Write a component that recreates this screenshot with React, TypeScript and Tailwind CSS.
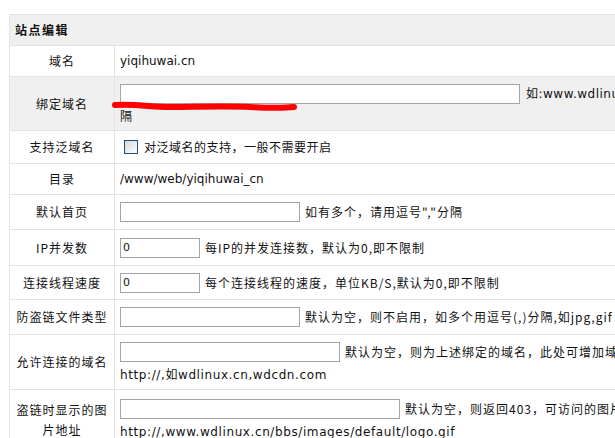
import React from "react"

const cjk = "font-['Noto_Sans_CJK_SC',sans-serif]"
const mixed = "font-['DejaVu_Sans','Noto_Sans_CJK_SC',sans-serif]"

function Row({
  label,
  h,
  gray,
  children,
}: {
  label: React.ReactNode
  h: string
  gray?: boolean
  children: React.ReactNode
}) {
  return (
    <div className={`flex border-b border-[#e3e3e3] ${h} ${gray ? "bg-[#f0f0f0]" : "bg-white"}`}>
      <div
        className={`w-[105px] shrink-0 border-r border-[#e3e3e3] flex items-center justify-center text-center text-[12px] leading-[20px] tracking-[1px] text-[#111] ${cjk}`}
      >
        {label}
      </div>
      <div className="flex-1 flex flex-col justify-center pl-[5px] text-[12px] text-[#111] whitespace-nowrap overflow-hidden">
        {children}
      </div>
    </div>
  )
}

function Input({ w, value }: { w: string; value?: string }) {
  return (
    <span
      className={`inline-block shrink-0 ${w} h-[20px] border border-[#a5a5a5] bg-white align-middle text-[11px] leading-[18px] pl-[2px] font-['DejaVu_Sans',sans-serif]`}
    >
      {value}
    </span>
  )
}

function Hint({ children }: { children: React.ReactNode }) {
  return <span className={`ml-[5px] align-middle tracking-[1px] ${cjk}`}>{children}</span>
}

export default function App() {
  return (
    <div className="w-[615px] h-[438px] overflow-hidden bg-white relative">
      <div className="ml-[9px] mt-[14px] w-[760px] border-t border-l border-[#e3e3e3]">
        <div className="h-[31px] bg-[#f0f0f0] border-b border-[#e3e3e3] flex items-center pl-[5px]">
          <span className={`text-[12px] font-bold tracking-[1.5px] text-[#111] ${cjk}`}>站点编辑</span>
        </div>

        <Row label="域名" h="h-[31px]">
          <span className={mixed}>yiqihuwai.cn</span>
        </Row>

        <Row label="绑定域名" h="h-[54px]" gray>
          <div className="flex items-center">
            <Input w="w-[400px]" />
            <span className={`ml-[6px] ${mixed} text-[12px] tracking-[0.5px]`}>
              如:www.wdlinux.cn 多个用逗号","分
            </span>
          </div>
          <div className={`mt-[4px] leading-[16px] ${cjk}`}>隔</div>
        </Row>

        <Row label="支持泛域名" h="h-[33px]">
          <div className="flex items-center">
            <span className="ml-[4px] w-[14px] h-[14px] border-[1.5px] border-[#1d4f7c] bg-gradient-to-br from-[#d8d8d8] to-white" />
            <span className={`ml-[6px] tracking-[0.5px] ${cjk}`}>对泛域名的支持，一般不需要开启</span>
          </div>
        </Row>

        <Row label="目录" h="h-[31px]">
          <span className={mixed}>/www/web/yiqihuwai_cn</span>
        </Row>

        <Row label="默认首页" h="h-[35px]">
          <div className="flex items-center">
            <Input w="w-[180px]" />
            <Hint>如有多个，请用逗号","分隔</Hint>
          </div>
        </Row>

        <Row label="IP并发数" h="h-[36px]">
          <div className="flex items-center">
            <Input w="w-[80px]" value="0" />
            <Hint>每IP的并发连接数，默认为0,即不限制</Hint>
          </div>
        </Row>

        <Row label="连接线程速度" h="h-[34px]">
          <div className="flex items-center">
            <Input w="w-[80px]" value="0" />
            <Hint>每个连接线程的速度，单位KB/S,默认为0,即不限制</Hint>
          </div>
        </Row>

        <Row label="防盗链文件类型" h="h-[35px]">
          <div className="flex items-center">
            <Input w="w-[180px]" />
            <Hint>默认为空，则不启用，如多个用逗号(,)分隔,如jpg,gif</Hint>
          </div>
        </Row>

        <Row label="允许连接的域名" h="h-[55px]">
          <div className="flex items-center">
            <Input w="w-[220px]" />
            <Hint>默认为空，则为上述绑定的域名，此处可增加域名</Hint>
          </div>
          <div className={`mt-[5px] leading-[16px] tracking-[0.6px] ${mixed}`}>http://,如wdlinux.cn,wdcdn.com</div>
        </Row>

        <Row label={<span className="px-[6px]">盗链时显示的图片地址</span>} h="h-[60px]">
          <div className="flex items-center">
            <Input w="w-[280px]" />
            <Hint>默认为空，则返回403，可访问的图片</Hint>
          </div>
          <div className={`mt-[5px] leading-[16px] tracking-[0.6px] ${mixed}`}>
            http://,www.wdlinux.cn/bbs/images/default/logo.gif
          </div>
        </Row>
      </div>

      <svg className="absolute left-[110px] top-[99px]" width="190" height="14" viewBox="0 0 190 14">
        <path
          d="M5 6 C 30 5, 40 8, 60 8 S 120 7, 140 8 S 175 9, 184 8"
          stroke="#ff0000"
          strokeWidth="6"
          strokeLinecap="round"
          fill="none"
        />
      </svg>
    </div>
  )
}
